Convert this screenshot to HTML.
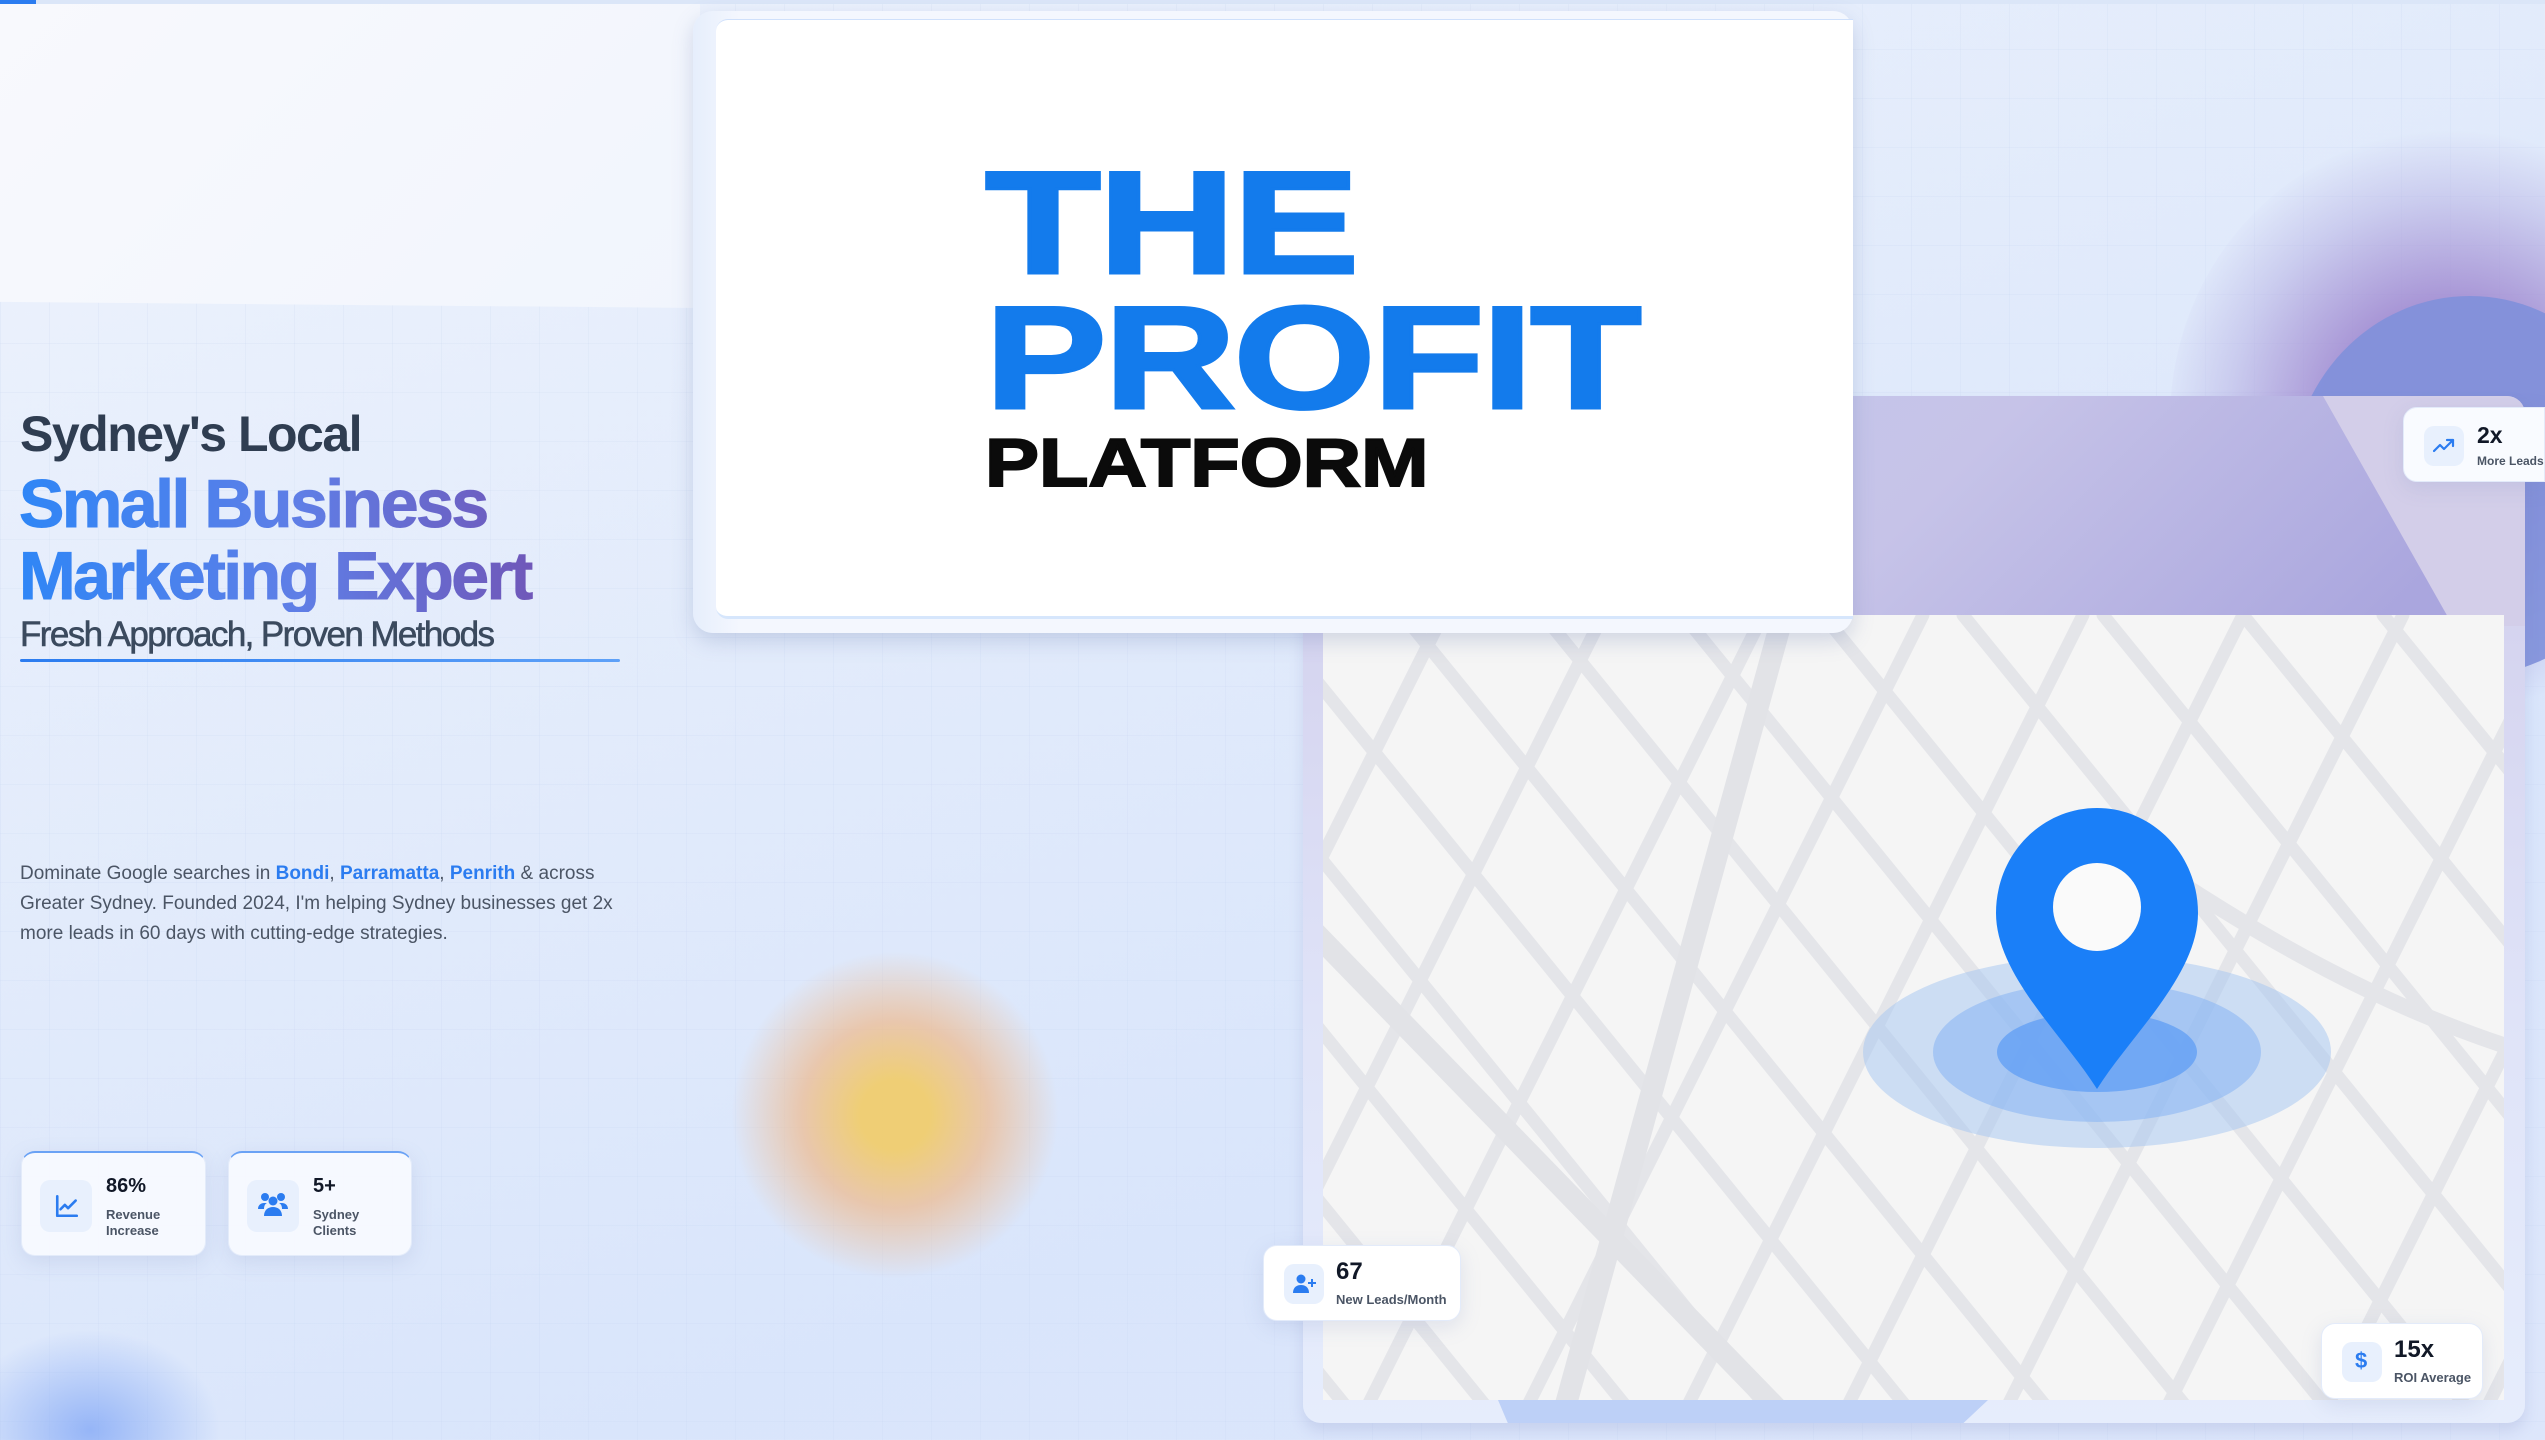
<!DOCTYPE html>
<html style="width:2545px;height:1440px;overflow:hidden"><head><meta charset="utf-8">
<style>
*{margin:0;padding:0;box-sizing:border-box}
body{width:2545px;height:1440px;overflow:hidden;position:relative;font-family:"Liberation Sans",sans-serif;
background:linear-gradient(160deg,#eef3fd 0%,#e2ebfb 40%,#d9e5fb 70%,#dde6fb 100%);}
.grid{position:absolute;left:0;top:0;width:2545px;height:1440px;background-image:linear-gradient(rgba(190,205,235,.15) 1px,transparent 1px),linear-gradient(90deg,rgba(190,205,235,.15) 1px,transparent 1px);background-size:49px 49px}
.topband{position:absolute;left:0;top:0;width:700px;height:308px;background:linear-gradient(135deg,#f8f9fd,#f1f5fd);clip-path:polygon(0 0,100% 0,100% 100%,0 98%)}
.abs{position:absolute}
.card{position:absolute;background:rgba(248,250,255,.93);border-radius:14px;box-shadow:0 6px 20px rgba(120,140,190,.18);border:1px solid #e3ebfa}
.ib{position:absolute;background:#e8f0fd;border-radius:10px}
.num{position:absolute;font-weight:700;color:#111827}
.lbl{position:absolute;font-weight:700;color:#4b5565;line-height:1.25}
</style></head><body>
<div class="grid"></div>
<div class="topband"></div>
<div class="abs" style="left:0;top:0;width:2545px;height:4px;background:#dbe6f8"></div>
<div class="abs" style="left:0;top:0;width:36px;height:4px;background:#2b7cf0"></div>

<!-- blobs -->
<div class="abs" style="left:2170px;top:130px;width:560px;height:580px;border-radius:50%;background:radial-gradient(circle,rgba(155,130,205,.8) 30%,rgba(170,160,220,.4) 55%,rgba(210,210,245,0) 72%)"></div>
<div class="abs" style="left:2290px;top:296px;width:360px;height:380px;border-radius:50%;background:#8090da;opacity:.9"></div>
<div class="abs" style="left:730px;top:950px;width:330px;height:330px;border-radius:50%;background:radial-gradient(circle at 50% 50%,rgba(240,205,110,.95) 15%,rgba(238,185,140,.7) 40%,rgba(220,215,225,0) 70%)"></div>
<div class="abs" style="left:0;top:1330px;width:220px;height:110px;background:radial-gradient(ellipse 130px 100px at 90px 100px,rgba(120,160,245,.7),rgba(150,180,245,0) 100%)"></div>

<!-- headline -->
<div class="abs" style="left:20px;top:405px;font-size:50px;font-weight:700;color:#2f3d51;letter-spacing:-1.5px;white-space:nowrap">Sydney's Local</div>
<div class="abs" style="left:19px;top:468px;font-size:68px;font-weight:700;letter-spacing:-2.5px;line-height:72px;white-space:nowrap;background:linear-gradient(90deg,#2f86f6 0%,#5f7ee6 50%,#7350b0 100%);-webkit-background-clip:text;background-clip:text;color:transparent;width:560px;-webkit-text-stroke:1px transparent">Small Business<br>Marketing Expert</div>
<div class="abs" style="left:20px;top:615px;font-size:35px;font-weight:400;color:#3b4a5e;letter-spacing:-1.6px;white-space:nowrap;-webkit-text-stroke:.6px #3b4a5e">Fresh Approach, Proven Methods</div>
<div class="abs" style="left:20px;top:659px;width:600px;height:3px;border-radius:2px;background:linear-gradient(90deg,#2b7cf0,#5ea1f8)"></div>
<div class="abs" style="left:20px;top:859px;width:600px;font-size:19px;line-height:30px;color:#4b5565">Dominate Google searches in <b style="color:#2b7cf0">Bondi</b>, <b style="color:#2b7cf0">Parramatta</b>, <b style="color:#2b7cf0">Penrith</b> &amp; across Greater Sydney. Founded 2024, I'm helping Sydney businesses get 2x more leads in 60 days with cutting-edge strategies.</div>

<!-- stat cards -->
<div class="card" style="left:21px;top:1151px;width:185px;height:105px;border-top:2px solid #6aa2f5">
 <div class="ib" style="left:18px;top:27px;width:52px;height:52px"></div>
 <svg class="abs" style="left:32px;top:40px" width="26" height="26" viewBox="0 0 24 24" fill="none" stroke="#2b7cf0" stroke-width="2.4" stroke-linecap="round" stroke-linejoin="round"><path d="M3 3v18h18"/><path d="M6 15l4-4 3 3 7-7"/></svg>
 <div class="num" style="left:84px;top:22px;font-size:20px">86%</div>
 <div class="lbl" style="left:84px;top:54px;font-size:13px">Revenue<br>Increase</div>
</div>
<div class="card" style="left:228px;top:1151px;width:184px;height:105px;border-top:2px solid #6aa2f5">
 <div class="ib" style="left:18px;top:27px;width:52px;height:52px"></div>
 <svg class="abs" style="left:28px;top:38px" width="32" height="28" viewBox="0 0 32 28" fill="#2b7cf0"><circle cx="8" cy="6" r="4"/><circle cx="24" cy="6" r="4"/><circle cx="16" cy="10" r="4.5"/><path d="M1 18c0-4 3-6 6-6h3c-2 1-3 3-3 6z"/><path d="M31 18c0-4-3-6-6-6h-3c2 1 3 3 3 6z"/><path d="M7 25c0-6 4-9 9-9s9 3 9 9z"/></svg>
 <div class="num" style="left:84px;top:22px;font-size:20px">5+</div>
 <div class="lbl" style="left:84px;top:54px;font-size:13px">Sydney<br>Clients</div>
</div>

<!-- map card -->
<div class="abs" style="left:1303px;top:396px;width:1222px;height:1027px;border-radius:18px;background:linear-gradient(180deg,#cfcbea,#dfe3f8 60%,#e6edfc);box-shadow:0 8px 14px rgba(120,130,190,.2);overflow:hidden">
 <div class="abs" style="left:0;top:0;width:1222px;height:230px;background:#d3cee9"></div>
 <div class="abs" style="left:0;top:0;width:1222px;height:230px;background:linear-gradient(135deg,#c2cbef,#c6c3e8 50%,#aaa6de 90%);clip-path:polygon(0 0,1020px 0,1150px 230px,0 230px)"></div>
 <div class="abs" style="left:195px;top:1004px;width:490px;height:23px;background:#bdd0f7;clip-path:polygon(0 0,100% 0,95% 100%,2% 100%)"></div>
</div>
<svg class="abs" style="left:1323px;top:615px" width="1181" height="785" viewBox="0 0 1181 785">
 <rect width="1181" height="785" fill="#f5f5f5"/>
 <g stroke="#e4e5e9" stroke-width="13" fill="none" stroke-linecap="round">
  <path d="M-900 0L-250 800M-760 0L-110 800M-620 0L30 800M-480 0L170 800M-340 0L310 800M-200 0L450 800M-60 0L590 800M80 0L730 800M220 0L870 800M360 0L1010 800M500 0L1150 800M640 0L1290 800M780 0L1430 800M920 0L1570 800M1060 0L1710 800"/>
  <path d="M120 0L-280 800M280 0L-120 800M440 0L40 800M600 0L200 800M760 0L360 800M920 0L520 800M1080 0L680 800M1240 0L840 800M1400 0L1000 800M1560 0L1160 800"/>
  <path d="M830 250C950 330 1060 390 1180 430" stroke-width="16"/>
 </g>
 <g stroke="#e2e3e7" stroke-width="22" fill="none">
  <path d="M-200 120L460 800"/><path d="M460 0L240 800"/>
 </g>
 <ellipse cx="774" cy="437" rx="234" ry="96" fill="#a9c8f0" opacity=".55"/>
 <ellipse cx="774" cy="437" rx="164" ry="70" fill="#8cb8f3" opacity=".6"/>
 <ellipse cx="774" cy="437" rx="100" ry="40" fill="#5f9ef4" opacity=".75"/>
 <path d="M774 193C718 193 673 240 673 298C673 360 740 420 774 474C808 420 875 360 875 298C875 240 830 193 774 193Z" fill="#1a7ff8"/>
 <ellipse cx="774" cy="292" rx="44" ry="44" fill="#fafafa"/>
</svg>

<!-- logo card -->
<div class="abs" style="left:693px;top:11px;width:1160px;height:622px;border-radius:20px;background:linear-gradient(90deg,#e6eefc,#f4f7fe 4%);box-shadow:0 8px 20px rgba(100,120,170,.25)">
 <div class="abs" style="left:23px;top:8px;width:1137px;height:600px;background:#fff;border-radius:12px 0 0 12px;border-top:1px solid #cfe0fb;border-bottom:3px solid #d6e6fc"></div>
 <div class="abs" style="left:292px;top:139px;font-size:146px;font-weight:900;color:#137bec;transform:scaleX(1.3);transform-origin:0 0;line-height:1;-webkit-text-stroke:3px #137bec;letter-spacing:-2px">THE</div>
 <div class="abs" style="left:292px;top:274px;font-size:146px;font-weight:900;color:#137bec;transform:scaleX(1.25);transform-origin:0 0;line-height:1;-webkit-text-stroke:3px #137bec;letter-spacing:-2px">PROFIT</div>
 <div class="abs" style="left:292px;top:418px;font-size:68px;font-weight:900;color:#0b0b0b;transform:scaleX(1.19);transform-origin:0 0;line-height:1;-webkit-text-stroke:2px #0b0b0b">PLATFORM</div>
</div>

<!-- floating cards -->
<div class="card" style="left:1263px;top:1245px;width:198px;height:76px;background:#fff">
 <div class="ib" style="left:20px;top:18px;width:40px;height:40px"></div>
 <svg class="abs" style="left:29px;top:28px" width="24" height="20" viewBox="0 0 24 20" fill="#2b7cf0"><circle cx="8" cy="5" r="4.5"/><path d="M0 19c0-6 4-8 8-8s8 2 8 8z"/><path d="M19 5v8M15 9h8" stroke="#2b7cf0" stroke-width="2"/></svg>
 <div class="num" style="left:72px;top:12px;font-size:24px">67</div>
 <div class="lbl" style="left:72px;top:46px;font-size:13px;white-space:nowrap">New Leads/Month</div>
</div>
<div class="card" style="left:2321px;top:1323px;width:162px;height:76px;background:#fff">
 <div class="ib" style="left:20px;top:18px;width:40px;height:40px"></div>
 <div class="abs" style="left:33px;top:24px;font-size:22px;font-weight:700;color:#2b7cf0">$</div>
 <div class="num" style="left:72px;top:12px;font-size:24px">15x</div>
 <div class="lbl" style="left:72px;top:46px;font-size:13px;white-space:nowrap">ROI Average</div>
</div>
<div class="card" style="left:2403px;top:407px;width:142px;height:75px;background:#f9fbff;border-radius:14px 0 0 14px">
 <div class="ib" style="left:20px;top:18px;width:40px;height:40px"></div>
 <svg class="abs" style="left:29px;top:29px" width="22" height="16" viewBox="0 0 22 16" fill="none" stroke="#2b7cf0" stroke-width="2.2" stroke-linecap="round" stroke-linejoin="round"><path d="M1 14l6-6 4 4 9-9"/><path d="M14 3h6v6"/></svg>
 <div class="num" style="left:73px;top:14px;font-size:23px">2x</div>
 <div class="lbl" style="left:73px;top:46px;font-size:12px;white-space:nowrap">More Leads</div>
</div>
</body></html>
